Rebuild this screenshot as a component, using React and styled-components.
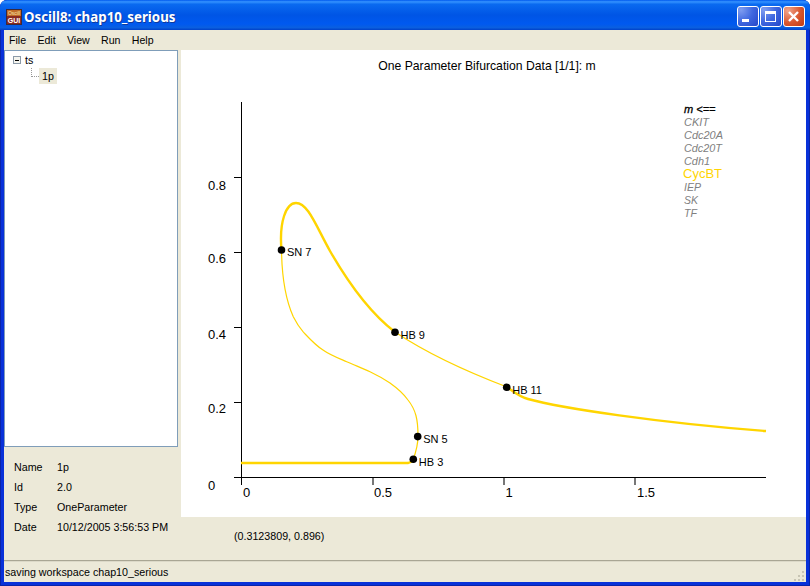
import React from "react";
import styled, { createGlobalStyle } from "styled-components";

const Global = createGlobalStyle`
  html, body { margin: 0; padding: 0; background: #fff; }
  * { box-sizing: border-box; }
`;

const UI_FONT = `"Liberation Sans", Arial, sans-serif`;

const Win = styled.div`
  width: 810px;
  height: 586px;
  display: flex;
  flex-direction: column;
  font-family: ${UI_FONT};
  font-size: 10.7px;
  color: #000;
  background: #0831d9;
  border-radius: 7px 7px 0 0;
  overflow: hidden;
  box-shadow: inset 0 0 0 1px #0a24a8;
`;
const TitleBar = styled.div`
  height: 30px;
  flex: none;
  display: flex;
  align-items: center;
  padding: 3px 5px 0 6px;
  background: linear-gradient(
    to bottom,
    #0058ee 0%,
    #3593ff 6%,
    #0a6af0 14%,
    #0055e5 50%,
    #0059f0 80%,
    #0a5fe0 92%,
    #0041c8 100%
  );
`;
const Title = styled.div`
  margin-left: 2px;
  flex: 1;
  color: #fff;
  font-family: "Noto Sans", sans-serif;
  font-weight: 700;
  font-size: 13.3px;
  text-shadow: 1px 1px 0 #0f3a9c;
`;
const WinBtn = styled.div`
  width: 22px;
  height: 21px;
  margin-left: 1px;
  border: 1px solid #fff;
  border-radius: 3px;
  background: ${(p) =>
    p.$close
      ? "radial-gradient(circle at 20% 20%, #f0a58c, #d9572f 55%, #c03a12)"
      : "radial-gradient(circle at 15% 15%, #7f9df0, #3f68e0 50%, #2547c8)"};
`;
const Body = styled.div`
  flex: 1;
  margin: 0 4px 4px;
  display: flex;
  flex-direction: column;
  background: #ece9d8;
  min-height: 0;
`;
const MenuBar = styled.div`
  height: 20px;
  flex: none;
  display: flex;
  align-items: center;
  padding-left: 5px;
  gap: 11.3px;
  font-size: 10.6px;
`;
const Main = styled.div`
  flex: 1;
  display: flex;
  min-height: 0;
`;
const Side = styled.div`
  width: 177px;
  flex: none;
  display: flex;
  flex-direction: column;
`;
const Tree = styled.div`
  height: 397px;
  width: 174px;
  background: #fff;
  border: 1px solid #7f9db9;
  padding: 1px 0 0 8px;
`;
const TreeRow = styled.div`
  display: flex;
  align-items: center;
  height: 16px;
  padding-left: ${(p) => p.$indent || 0}px;
`;
const Expander = styled.div`
  width: 8px;
  height: 8px;
  border: 1px solid #8c9aa8;
  background: #f4f4ee;
  display: flex;
  align-items: center;
  justify-content: center;
  margin-right: 4px;
  &::after {
    content: "";
    width: 4px;
    height: 1px;
    background: #000;
  }
`;
const Dots = styled.div`
  width: 8px;
  height: 9px;
  align-self: flex-start;
  border-left: 1px dotted #999;
  border-bottom: 1px dotted #999;
`;
const Selected = styled.span`
  background: #ece9d8;
  padding: 0 3px;
  line-height: 16px;
`;
const Info = styled.div`
  padding: 10px 0 0 10px;
  display: grid;
  grid-template-columns: 43px 1fr;
  grid-auto-rows: 20px;
  align-items: center;
`;
const Right = styled.div`
  flex: 1;
  display: flex;
  flex-direction: column;
  min-width: 0;
`;
const Plot = styled.div`
  height: 467px;
  background: #fff;
  flex: none;
`;
const Coord = styled.div`
  padding: 13px 0 0 53px;
`;
const Status = styled.div`
  height: 22px;
  flex: none;
  border-top: 1px solid #a9a694;
  box-shadow: inset 0 1px 0 #dcd9c8;
  display: flex;
  align-items: center;
  justify-content: space-between;
  padding: 0 1px;
`;
const Grip = styled.svg`
  align-self: flex-end;
`;
const Label = styled.text`
  font-family: ${UI_FONT};
  font-size: ${(p) => p.$size || 11}px;
  fill: ${(p) => p.$color || "#000"};
  font-style: ${(p) => (p.$italic ? "italic" : "normal")};
`;
const LegendHead = styled(Label)`
  stroke: #000;
  stroke-width: 0.3px;
`;

const CURVE = "#ffd500";

// drawn in window coordinates, svg sits at (181, 50)
const thick = [
  "M241 463 H408 L413 461",
  "M281.5 250 C279 222 286 203 296 203 C308 203 316 226 330 251 C349 284 370 313 395 332",
  "M507 387 C513 391 518 396 528 399 C560 408 660 423 766 431",
];
const thin = [
  "M413 460 C416 452 418 445 418 436 C418 420 416 410 408 400 C403 393 397 388 390 383 C384 379 377 375 370 371.7 C362 368 354 365 346.7 361.7 C338 358 330 355 323 350 C315 345 309 338 303 331.7 C299 327 296 322 293.3 316.7 C288 305 282 285 281.5 250",
  "M395 332 C425 352 465 371 507 387",
];
const points = [
  [281.5, 250, "SN 7"],
  [395, 332.3, "HB 9"],
  [506.7, 387.3, "HB 11"],
  [417.7, 436.6, "SN 5"],
  [413.3, 459.3, "HB 3"],
];
const yTicks = [
  [177, "0.8", 190],
  [252, "0.6", 263],
  [327, "0.4", 339],
  [402, "0.2", 413],
];
const xTicks = [
  [372, "0.5", 383],
  [503, "1", 509],
  [634, "1.5", 646],
];
const legend = [
  ["CKIT", 126, 25],
  ["Cdc20A", 139, 39],
  ["Cdc20T", 152, 38],
  ["Cdh1", 165, 26],
  ["IEP", 191, 17],
  ["SK", 204, 14],
  ["TF", 217, 13],
];

function Chart() {
  return (
    <svg width="625" height="467" viewBox="181 50 625 467">
      <Label x="487" y="70" $size={12.2} textAnchor="middle">
        One Parameter Bifurcation Data [1/1]: m
      </Label>
      <path d="M241.5 102 V485 M234 477.5 H766" stroke="#000" fill="none" />
      {yTicks.map(([y, t, ly]) => (
        <g key={t}>
          <path d={`M234 ${y}.5 H241`} stroke="#000" />
          <Label x="208" y={ly} $size={13}>{t}</Label>
        </g>
      ))}
      <Label x="208" y="490" $size={13}>0</Label>
      <Label x="246.5" y="497" $size={13} textAnchor="middle">0</Label>
      {xTicks.map(([x, t, lx]) => (
        <g key={t}>
          <path d={`M${x + 1} 478 V485`} stroke="#777" strokeWidth="2" />
          <Label x={lx} y="497" $size={13} textAnchor="middle">{t}</Label>
        </g>
      ))}
      {thin.map((d) => (
        <path key={d} d={d} stroke={CURVE} strokeWidth="1.2" fill="none" />
      ))}
      {thick.map((d) => (
        <path key={d} d={d} stroke={CURVE} strokeWidth="2.4" fill="none" />
      ))}
      {points.map(([x, y, t]) => (
        <g key={t}>
          <circle cx={x} cy={y} r="3.8" fill="#000" />
          <Label x={x + 5.5} y={y + 6.3} $size={11}>{t}</Label>
        </g>
      ))}
      <LegendHead x="684" y="113" $italic>m &lt;==</LegendHead>
      {legend.map(([t, y, w]) => (
        <Label
          key={t}
          x="684"
          y={y}
          $size={11.4}
          $italic
          $color="#808080"
          textLength={w}
          lengthAdjust="spacingAndGlyphs"
        >
          {t}
        </Label>
      ))}
      <Label
        x="683"
        y="178"
        $size={12.5}
        $color="#ffd500"
        textLength="39"
        lengthAdjust="spacingAndGlyphs"
      >
        CycBT
      </Label>
    </svg>
  );
}

function AppIcon() {
  return (
    <svg width="16" height="16" viewBox="0 0 16 16">
      <rect width="16" height="16" fill="#3a2a3a" />
      <rect x="1" y="1" width="14" height="6" fill="#c06a28" />
      <rect x="1" y="7" width="14" height="8" fill="#8a2a20" />
      <text x="8" y="6" fontSize="5" fontFamily="Liberation Sans" fill="#f8e8b0" textAnchor="middle">Oscill</text>
      <text x="8" y="14" fontSize="7" fontWeight="700" fontFamily="Liberation Sans" fill="#fff" textAnchor="middle">GUI</text>
    </svg>
  );
}

export default function App() {
  return (
    <Win>
      <Global />
      <TitleBar>
        <AppIcon />
        <Title>Oscill8: chap10_serious</Title>
        <WinBtn>
          <svg width="20" height="19"><rect x="4" y="12" width="7" height="3" fill="#fff" /></svg>
        </WinBtn>
        <WinBtn>
          <svg width="20" height="19"><rect x="4.5" y="4.5" width="10" height="10" fill="none" stroke="#fff" /><rect x="4" y="4" width="11" height="3" fill="#fff" /></svg>
        </WinBtn>
        <WinBtn $close>
          <svg width="20" height="19"><path d="M5 5 L14 14 M14 5 L5 14" stroke="#fff" strokeWidth="2.4" /></svg>
        </WinBtn>
      </TitleBar>
      <Body>
        <MenuBar>
          <span>File</span>
          <span>Edit</span>
          <span>View</span>
          <span>Run</span>
          <span>Help</span>
        </MenuBar>
        <Main>
          <Side>
            <Tree>
              <TreeRow><Expander />ts</TreeRow>
              <TreeRow $indent={18}><Dots /><Selected>1p</Selected></TreeRow>
            </Tree>
            <Info>
              <span>Name</span><span>1p</span>
              <span>Id</span><span>2.0</span>
              <span>Type</span><span>OneParameter</span>
              <span>Date</span><span>10/12/2005 3:56:53 PM</span>
            </Info>
          </Side>
          <Right>
            <Plot><Chart /></Plot>
            <Coord>(0.3123809, 0.896)</Coord>
          </Right>
        </Main>
        <Status>
          <span>saving workspace chap10_serious</span>
          <Grip width="13" height="13" viewBox="0 0 13 13">
            {[[10, 2], [10, 6], [6, 6], [10, 10], [6, 10], [2, 10]].map(([x, y]) => (
              <rect key={`${x}-${y}`} x={x} y={y} width="2" height="2" fill="#c8c5b4" />
            ))}
          </Grip>
        </Status>
      </Body>
    </Win>
  );
}
